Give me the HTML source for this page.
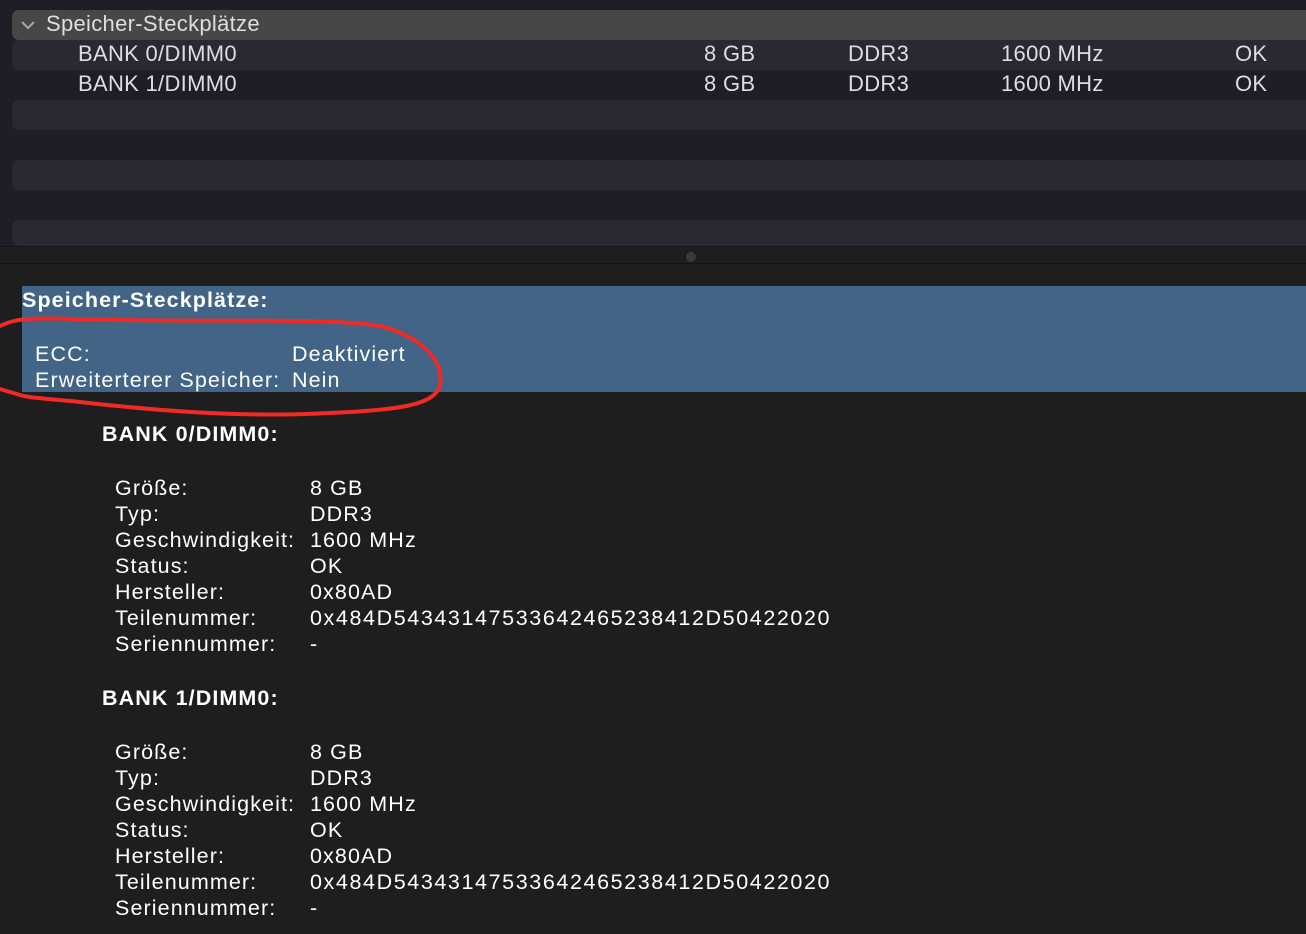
<!DOCTYPE html>
<html><head><meta charset="utf-8"><style>
*{margin:0;padding:0;box-sizing:border-box}
body{width:1306px;height:934px;background:#1e1e1e;font-family:"Liberation Sans",sans-serif;position:relative;overflow:hidden}
.top{position:absolute;left:0;top:0;width:1306px;height:246px;background:#1f1e27}
.row{position:absolute;left:12px;right:0;height:30px;border-radius:7px 0 0 7px;background:#2a2832}
.sel{background:#474747}
.t{position:absolute;color:#dedde2;font-size:22px;line-height:30px;white-space:nowrap;letter-spacing:0.3px}
.div{position:absolute;left:0;top:246px;width:1306px;height:18px;background:#1e1e1e;border-top:1px solid #151515;border-bottom:1px solid #141414}
.dot{position:absolute;left:686px;top:5px;width:10px;height:10px;border-radius:50%;background:#3a3a3a}
.hl{position:absolute;left:22px;top:286px;width:1284px;height:106px;background:#416487}
.b{position:absolute;color:#fff;font-size:21.5px;line-height:26px;white-space:nowrap;letter-spacing:1.1px}
.bold{font-weight:bold;letter-spacing:1.1px}
.hx{letter-spacing:1.6px}
</style></head><body>
<div class="top">
<div class="row sel" style="top:10px"></div>
<div class="row" style="top:40px"></div>
<div class="row" style="top:100px"></div>
<div class="row" style="top:160px"></div>
<div class="row" style="top:220px;height:26px"></div>
<svg style="position:absolute;left:20px;top:17px" width="16" height="16" viewBox="0 0 16 16"><path d="M2 5 L8 11 L14 5" stroke="#aaa" stroke-width="2" fill="none"/></svg>
<div class="t" style="left:46px;top:9px">Speicher-Steckplätze</div>
<div class="t" style="left:78px;top:39px">BANK 0/DIMM0</div>
<div class="t" style="left:704px;top:39px">8 GB</div>
<div class="t" style="left:848px;top:39px">DDR3</div>
<div class="t" style="left:1001px;top:39px">1600 MHz</div>
<div class="t" style="left:1235px;top:39px">OK</div>
<div class="t" style="left:78px;top:69px">BANK 1/DIMM0</div>
<div class="t" style="left:704px;top:69px">8 GB</div>
<div class="t" style="left:848px;top:69px">DDR3</div>
<div class="t" style="left:1001px;top:69px">1600 MHz</div>
<div class="t" style="left:1235px;top:69px">OK</div>
</div>
<div class="div"><div class="dot"></div></div>
<div class="hl"></div>
<div class="b bold" style="left:22px;top:287px">Speicher-Steckplätze:</div>
<div class="b" style="left:35px;top:341px">ECC:</div>
<div class="b" style="left:292px;top:341px">Deaktiviert</div>
<div class="b" style="left:35px;top:367px">Erweiterterer Speicher:</div>
<div class="b" style="left:292px;top:367px">Nein</div>
<svg style="position:absolute;left:0;top:0" width="1306" height="934"><path d="M0 326 C20 316 40 318 120 320 C250 322 330 318 380 326 C420 336 445 360 440 385 C435 405 400 410 330 413 C240 418 150 410 80 402 C50 399 30 398 20 395 C10 392 0 389 0 389" stroke="#f12a23" stroke-width="4" fill="none" stroke-linecap="round"/></svg>

<div class="b bold" style="left:102px;top:421px">BANK 0/DIMM0:</div>
<div class="b" style="left:115px;top:475px">Größe:<br>Typ:<br>Geschwindigkeit:<br>Status:<br>Hersteller:<br>Teilenummer:<br>Seriennummer:</div>
<div class="b" style="left:310px;top:475px">8 GB<br>DDR3<br>1600 MHz<br>OK<br>0x80AD<br><span class="hx">0x484D54343147533642465238412D50422020</span><br>-</div>
<div class="b bold" style="left:102px;top:685px">BANK 1/DIMM0:</div>
<div class="b" style="left:115px;top:739px">Größe:<br>Typ:<br>Geschwindigkeit:<br>Status:<br>Hersteller:<br>Teilenummer:<br>Seriennummer:</div>
<div class="b" style="left:310px;top:739px">8 GB<br>DDR3<br>1600 MHz<br>OK<br>0x80AD<br><span class="hx">0x484D54343147533642465238412D50422020</span><br>-</div>
</body></html>
